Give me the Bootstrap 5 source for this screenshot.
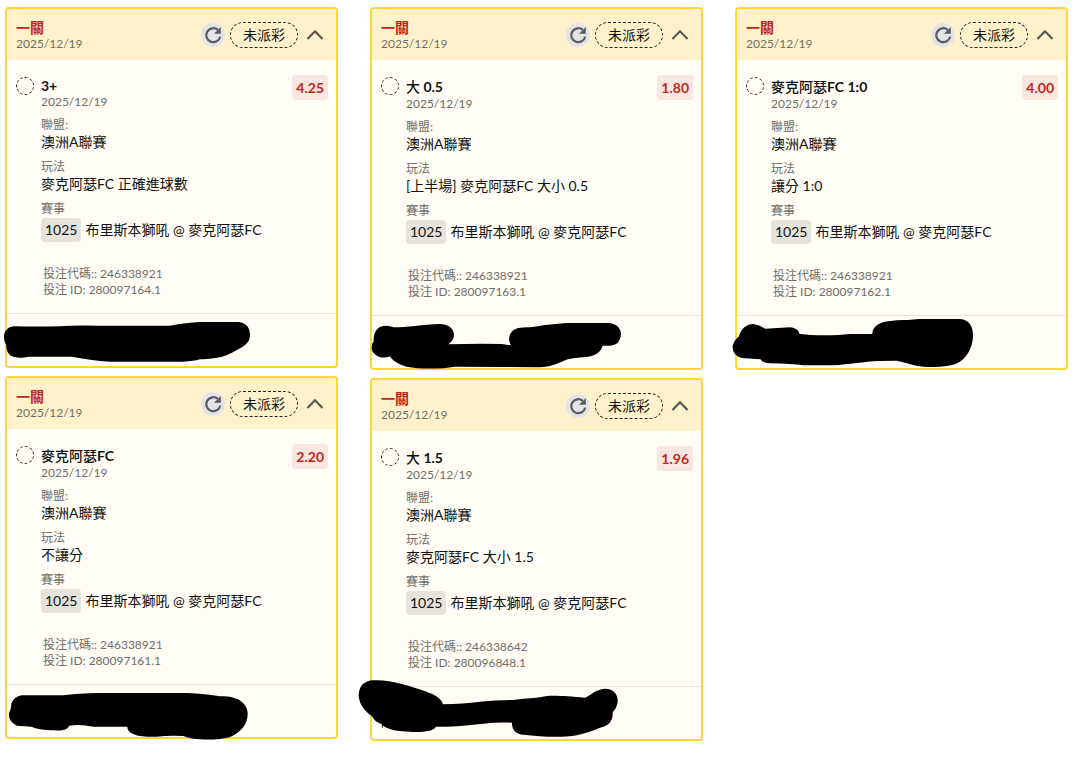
<!DOCTYPE html>
<html lang="zh-Hant">
<head>
<meta charset="utf-8">
<meta name="viewport" content="width=device-width, initial-scale=1">
<title>投注紀錄</title>
<link href="https://cdn.jsdelivr.net/npm/bootstrap@5.3.0/dist/css/bootstrap.min.css" rel="stylesheet">
<style>
body { font-family: Lato, "Noto Sans CJK TC", sans-serif; font-size: 14px; line-height: 18px; color: #111; background: #fff; }
.slips { padding: 7px 12px 16px 5px; overflow-x: clip; }
.slips > .row { --bs-gutter-x: 32px; }
.slip { --bs-card-border-width: 2px; --bs-card-border-color: #ffd632; --bs-card-border-radius: 4px; --bs-card-inner-border-radius: 2px; --bs-card-bg: #fffdf5; --bs-card-color: #111; }
.slip-head { background: #fff2cb; padding: 9px 12px 8px 9px; border: 0; }
.slip-title { padding-top: 2px; }
.slip-kind { font-size: 14px; line-height: 16px; font-weight: 700; color: #c0281c; margin: 0; }
.muted { font-size: 12px; line-height: 16px; color: #6f6e6a; margin: 0; }
.slip-refresh { width: 24px; height: 24px; padding: 0; border: 0; border-radius: 50%; background: #e3e4e8; color: #5c5c5c; margin-right: 5px; }
.slip-state { border: 1px dashed #222; border-radius: 13px; height: 26px; line-height: 24px; padding: 0 12px; margin-right: 8px; }
.slip-toggle { width: 18px; height: 24px; padding: 0; border: 0; background: none; color: #555; }
.slip-refresh svg, .slip-toggle svg { display: block; margin: auto; }
.slip-body { padding: 15px 8px 15px 9px; }
.slip-ring { width: 18px; height: 18px; margin: 2px 7px 0 0; border: 1px dashed #222; border-radius: 50%; }
.slip-pick { font-size: 14px; line-height: 18px; font-weight: 700; margin: 3px 0 0; }
.slip-pick.latin { line-height: 16px; }
.slip-pick .han { font-weight: 500; }
.slip-facts { margin: 7px 0 0; }
.slip-facts dt { font-size: 12px; line-height: 16px; font-weight: 400; color: #6f6e6a; }
.slip-facts dd { margin: 0 0 8px; }
.slip-facts dd.match { margin: 1px 0 24px; }
.slip-no { background: #e6e3dd; border-radius: 4px; padding: 0 4px; line-height: 24px; margin-right: 4px; }
.slip-odds { background: #f8e6df; color: #c0281c; border-radius: 4px; font-weight: 700; line-height: 25px; padding: 0 4px; height: 25px; }
.slip-codes { padding-left: 2px; }
.slip-foot { position: relative; height: 53px; padding: 0; background: none; border-top: 1px solid #e6e4de; }
.slip-ink { position: absolute; left: -20px; top: -40px; width: 300px; height: 110px; pointer-events: none; }
</style>
</head>
<body>
<svg class="d-none" aria-hidden="true">
  <symbol id="refresh" viewBox="0 0 18 18"><path d="M16.2 10.6A7 7 0 1 1 13.8 3.8" fill="none" stroke="currentColor" stroke-width="2.2"/><path d="M16.8 1v6.8H10z" fill="currentColor"/></symbol>
  <symbol id="up" viewBox="0 0 18 12"><path d="M1.5 10L9 2.2 16.5 10" fill="none" stroke="currentColor" stroke-width="2.1"/></symbol>
</svg>
<main class="container-fluid slips">
<div class="row gy-2">

  <div class="col-12 col-md-4 d-flex flex-column gap-2">
    <article class="card slip">
      <header class="card-header slip-head d-flex align-items-center">
        <div class="slip-title me-auto"><h2 class="slip-kind">一關</h2><p class="muted">2025/12/19</p></div>
        <button type="button" class="slip-refresh" aria-label="重新整理"><svg width="18" height="18"><use href="#refresh"/></svg></button>
        <span class="slip-state">未派彩</span>
        <button type="button" class="slip-toggle" aria-label="收合"><svg width="18" height="12"><use href="#up"/></svg></button>
      </header>
      <div class="card-body slip-body d-flex align-items-start">
        <span class="slip-ring flex-shrink-0"></span>
        <div class="flex-grow-1">
          <h3 class="slip-pick latin">3+</h3><p class="muted">2025/12/19</p>
          <dl class="slip-facts">
            <dt>聯盟:</dt><dd>澳洲A聯賽</dd>
            <dt>玩法</dt><dd>麥克阿瑟FC 正確進球數</dd>
            <dt>賽事</dt><dd class="match d-flex align-items-center"><span class="slip-no">1025</span>布里斯本獅吼 @ 麥克阿瑟FC</dd>
          </dl>
          <div class="slip-codes"><p class="muted">投注代碼:: 246338921</p><p class="muted">投注 ID: 280097164.1</p></div>
        </div>
        <span class="slip-odds">4.25</span>
      </div>
      <footer class="card-footer slip-foot">
        <svg class="slip-ink" viewBox="-39 72 900 330" aria-hidden="true"><path d="M45 229Q110 230 180 229Q220 225 300 227L510 227Q560 218 600 216L715 216C738 218 750 232 750 255C750 282 728 290 705 303C675 320 660 325 600 328Q580 334 550 335L330 335C290 333 250 325 215 320L85 320C60 327 40 322 30 316C20 305 18 294 19 284C10 272 10 252 17 242Q27 229 45 229Z"/></svg>
      </footer>
    </article>

    <article class="card slip">
      <header class="card-header slip-head d-flex align-items-center">
        <div class="slip-title me-auto"><h2 class="slip-kind">一關</h2><p class="muted">2025/12/19</p></div>
        <button type="button" class="slip-refresh" aria-label="重新整理"><svg width="18" height="18"><use href="#refresh"/></svg></button>
        <span class="slip-state">未派彩</span>
        <button type="button" class="slip-toggle" aria-label="收合"><svg width="18" height="12"><use href="#up"/></svg></button>
      </header>
      <div class="card-body slip-body d-flex align-items-start">
        <span class="slip-ring flex-shrink-0"></span>
        <div class="flex-grow-1">
          <h3 class="slip-pick"><span class="han">麥克阿瑟</span>FC</h3><p class="muted">2025/12/19</p>
          <dl class="slip-facts">
            <dt>聯盟:</dt><dd>澳洲A聯賽</dd>
            <dt>玩法</dt><dd>不讓分</dd>
            <dt>賽事</dt><dd class="match d-flex align-items-center"><span class="slip-no">1025</span>布里斯本獅吼 @ 麥克阿瑟FC</dd>
          </dl>
          <div class="slip-codes"><p class="muted">投注代碼:: 246338921</p><p class="muted">投注 ID: 280097161.1</p></div>
        </div>
        <span class="slip-odds">2.20</span>
      </div>
      <footer class="card-footer slip-foot">
        <svg class="slip-ink" viewBox="-39 75 900 330" aria-hidden="true"><path d="M65 226L190 226Q230 220 300 219L560 219Q620 222 660 229C705 227 742 245 743 280C744 315 720 338 692 350C655 362 580 362 550 348Q510 345 470 350C425 352 382 345 382 320L280 320Q240 312 208 317C200 333 180 332 150 331Q110 328 95 320L50 317C30 305 26 295 27 280Q35 262 34 250Q42 230 65 226Z"/></svg>
      </footer>
    </article>
  </div>

  <div class="col-12 col-md-4 d-flex flex-column gap-2">
    <article class="card slip">
      <header class="card-header slip-head d-flex align-items-center">
        <div class="slip-title me-auto"><h2 class="slip-kind">一關</h2><p class="muted">2025/12/19</p></div>
        <button type="button" class="slip-refresh" aria-label="重新整理"><svg width="18" height="18"><use href="#refresh"/></svg></button>
        <span class="slip-state">未派彩</span>
        <button type="button" class="slip-toggle" aria-label="收合"><svg width="18" height="12"><use href="#up"/></svg></button>
      </header>
      <div class="card-body slip-body d-flex align-items-start">
        <span class="slip-ring flex-shrink-0"></span>
        <div class="flex-grow-1">
          <h3 class="slip-pick"><span class="han">大</span> 0.5</h3><p class="muted">2025/12/19</p>
          <dl class="slip-facts">
            <dt>聯盟:</dt><dd>澳洲A聯賽</dd>
            <dt>玩法</dt><dd>[上半場] 麥克阿瑟FC 大小 0.5</dd>
            <dt>賽事</dt><dd class="match d-flex align-items-center"><span class="slip-no">1025</span>布里斯本獅吼 @ 麥克阿瑟FC</dd>
          </dl>
          <div class="slip-codes"><p class="muted">投注代碼:: 246338921</p><p class="muted">投注 ID: 280097163.1</p></div>
        </div>
        <span class="slip-odds">1.80</span>
      </div>
      <footer class="card-footer slip-foot">
        <svg class="slip-ink" viewBox="-24 78 900 330" aria-hidden="true"><path d="M41 268C41 240 58 227 78 227Q92 228 100 232C140 232 190 224 240 222C268 222 282 238 282 256Q281 272 265 283Q350 280 425 282L454 286C445 275 445 258 455 246C465 234 480 232 510 232C560 224 600 219 640 219L748 219C772 222 783 237 783 253C781 275 770 287 748 287L728 287C722 308 705 317 680 321C650 323 625 326 612 332C590 342 570 350 540 352L430 351L285 350C240 358 175 357 140 350C115 343 98 333 90 319C65 330 35 315 35 293Q35 280 41 274Z"/></svg>
      </footer>
    </article>

    <article class="card slip">
      <header class="card-header slip-head d-flex align-items-center">
        <div class="slip-title me-auto"><h2 class="slip-kind">一關</h2><p class="muted">2025/12/19</p></div>
        <button type="button" class="slip-refresh" aria-label="重新整理"><svg width="18" height="18"><use href="#refresh"/></svg></button>
        <span class="slip-state">未派彩</span>
        <button type="button" class="slip-toggle" aria-label="收合"><svg width="18" height="12"><use href="#up"/></svg></button>
      </header>
      <div class="card-body slip-body d-flex align-items-start">
        <span class="slip-ring flex-shrink-0"></span>
        <div class="flex-grow-1">
          <h3 class="slip-pick"><span class="han">大</span> 1.5</h3><p class="muted">2025/12/19</p>
          <dl class="slip-facts">
            <dt>聯盟:</dt><dd>澳洲A聯賽</dd>
            <dt>玩法</dt><dd>麥克阿瑟FC 大小 1.5</dd>
            <dt>賽事</dt><dd class="match d-flex align-items-center"><span class="slip-no">1025</span>布里斯本獅吼 @ 麥克阿瑟FC</dd>
          </dl>
          <div class="slip-codes"><p class="muted">投注代碼:: 246338642</p><p class="muted">投注 ID: 280096848.1</p></div>
        </div>
        <span class="slip-odds">1.96</span>
      </div>
      <footer class="card-footer slip-foot">
        <svg class="slip-ink" viewBox="6 81 900 330" aria-hidden="true"><path d="M26 227C26 200 42 181 70 181C120 178 180 198 230 215C260 226 275 238 279 253Q340 251 390 245C430 242 460 240 490 240C520 236 545 235 570 232C590 224 640 227 705 233C722 227 735 208 765 206C790 206 803 222 803 241C803 258 796 268 788 277C790 302 775 320 750 323C730 333 705 340 680 346C635 354 570 350 520 344C498 343 485 328 486 308Q440 306 400 311C360 315 310 321 258 320C250 335 215 337 180 335C145 334 125 330 110 323Q100 320 98 316L98 324L96 324L95 312C78 307 72 300 66 289C45 273 28 255 26 227Z"/></svg>
      </footer>
    </article>
  </div>

  <div class="col-12 col-md-4 d-flex flex-column gap-2">
    <article class="card slip">
      <header class="card-header slip-head d-flex align-items-center">
        <div class="slip-title me-auto"><h2 class="slip-kind">一關</h2><p class="muted">2025/12/19</p></div>
        <button type="button" class="slip-refresh" aria-label="重新整理"><svg width="18" height="18"><use href="#refresh"/></svg></button>
        <span class="slip-state">未派彩</span>
        <button type="button" class="slip-toggle" aria-label="收合"><svg width="18" height="12"><use href="#up"/></svg></button>
      </header>
      <div class="card-body slip-body d-flex align-items-start">
        <span class="slip-ring flex-shrink-0"></span>
        <div class="flex-grow-1">
          <h3 class="slip-pick"><span class="han">麥克阿瑟</span>FC 1:0</h3><p class="muted">2025/12/19</p>
          <dl class="slip-facts">
            <dt>聯盟:</dt><dd>澳洲A聯賽</dd>
            <dt>玩法</dt><dd>讓分 1:0</dd>
            <dt>賽事</dt><dd class="match d-flex align-items-center"><span class="slip-no">1025</span>布里斯本獅吼 @ 麥克阿瑟FC</dd>
          </dl>
          <div class="slip-codes"><p class="muted">投注代碼:: 246338921</p><p class="muted">投注 ID: 280097162.1</p></div>
        </div>
        <span class="slip-odds">4.00</span>
      </div>
      <footer class="card-footer slip-foot">
        <svg class="slip-ink" viewBox="-24 108 900 330" aria-hidden="true"><path d="M42 289C48 266 65 252 85 252Q106 255 120 266L195 262C212 264 222 271 223 281Q270 288 340 285L375 282L442 282C442 262 460 247 490 244Q520 239 550 240L580 237L705 237C735 240 745 262 744 290C742 325 725 358 690 373C660 382 630 381 595 380C565 377 540 367 515 362L460 363C420 365 370 373 325 376L235 376Q200 371 135 370Q115 370 106 358L60 355C35 353 22 340 23 317Q28 300 42 289Z"/></svg>
      </footer>
    </article>
  </div>

</div>
</main>
<script src="https://cdn.jsdelivr.net/npm/bootstrap@5.3.0/dist/js/bootstrap.bundle.min.js"></script>
</body>
</html>
